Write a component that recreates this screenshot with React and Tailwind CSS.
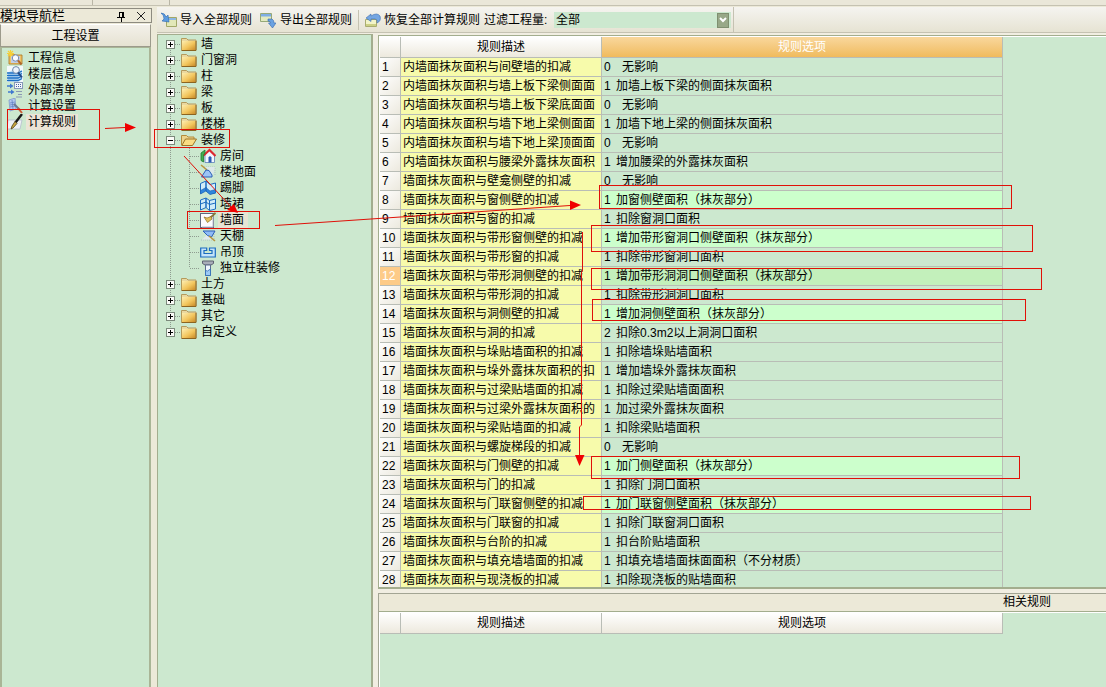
import { useState } from "react";

const NAV_ITEMS = [
  { label: "工程信息", icon: "project" },
  { label: "楼层信息", icon: "floors" },
  { label: "外部清单", icon: "list" },
  { label: "计算设置", icon: "settings" },
  { label: "计算规则", icon: "rules" },
];

const TREE = [
  { label: "墙" },
  { label: "门窗洞" },
  { label: "柱" },
  { label: "梁" },
  { label: "板" },
  { label: "楼梯" },
  {
    label: "装修",
    children: [
      { label: "房间", icon: "room" },
      { label: "楼地面", icon: "ground" },
      { label: "踢脚", icon: "skirting" },
      { label: "墙裙", icon: "dado" },
      { label: "墙面", icon: "wallface" },
      { label: "天棚", icon: "ceiling" },
      { label: "吊顶", icon: "suspended" },
      { label: "独立柱装修", icon: "column" },
    ],
  },
  { label: "土方" },
  { label: "基础" },
  { label: "其它" },
  { label: "自定义" },
];

// [description, option code, option text, highlighted]
const RULES = [
  ["内墙面抹灰面积与间壁墙的扣减", 0, "无影响"],
  ["内墙面抹灰面积与墙上板下梁侧面面", 1, "加墙上板下梁的侧面抹灰面积"],
  ["内墙面抹灰面积与墙上板下梁底面面", 0, "无影响"],
  ["内墙面抹灰面积与墙下地上梁侧面面", 1, "加墙下地上梁的侧面抹灰面积"],
  ["内墙面抹灰面积与墙下地上梁顶面面", 0, "无影响"],
  ["内墙面抹灰面积与腰梁外露抹灰面积", 1, "增加腰梁的外露抹灰面积"],
  ["墙面抹灰面积与壁龛侧壁的扣减", 0, "无影响"],
  ["墙面抹灰面积与窗侧壁的扣减", 1, "加窗侧壁面积（抹灰部分）", true],
  ["墙面抹灰面积与窗的扣减", 1, "扣除窗洞口面积"],
  ["墙面抹灰面积与带形窗侧壁的扣减", 1, "增加带形窗洞口侧壁面积（抹灰部分）", true],
  ["墙面抹灰面积与带形窗的扣减", 1, "扣除带形窗洞口面积"],
  ["墙面抹灰面积与带形洞侧壁的扣减", 1, "增加带形洞洞口侧壁面积（抹灰部分）", true],
  ["墙面抹灰面积与带形洞的扣减", 1, "扣除带形洞洞口面积"],
  ["墙面抹灰面积与洞侧壁的扣减", 1, "增加洞侧壁面积（抹灰部分）", true],
  ["墙面抹灰面积与洞的扣减", 2, "扣除0.3m2以上洞洞口面积"],
  ["墙面抹灰面积与垛贴墙面积的扣减", 1, "扣除墙垛贴墙面积"],
  ["墙面抹灰面积与垛外露抹灰面积的扣", 1, "增加墙垛外露抹灰面积"],
  ["墙面抹灰面积与过梁贴墙面的扣减", 1, "扣除过梁贴墙面面积"],
  ["墙面抹灰面积与过梁外露抹灰面积的", 1, "加过梁外露抹灰面积"],
  ["墙面抹灰面积与梁贴墙面的扣减", 1, "扣除梁贴墙面积"],
  ["墙面抹灰面积与螺旋梯段的扣减", 0, "无影响"],
  ["墙面抹灰面积与门侧壁的扣减", 1, "加门侧壁面积（抹灰部分）", true],
  ["墙面抹灰面积与门的扣减", 1, "扣除门洞口面积"],
  ["墙面抹灰面积与门联窗侧壁的扣减", 1, "加门联窗侧壁面积（抹灰部分）", true],
  ["墙面抹灰面积与门联窗的扣减", 1, "扣除门联窗洞口面积"],
  ["墙面抹灰面积与台阶的扣减", 1, "扣台阶贴墙面积"],
  ["墙面抹灰面积与填充墙墙面的扣减", 1, "扣填充墙墙面抹面面积（不分材质）"],
  ["墙面抹灰面积与现浇板的扣减", 1, "扣除现浇板的贴墙面积"],
];

const ICONS = {
  project: (
    <>
      <path d="M2 4h5l1 1h7v9H2z" fill="#f0c468" stroke="#a87420" strokeWidth=".8" />
      <rect x="4" y="6" width="9" height="7" fill="#c4cfe4" />
      <path d="M3.500 0v7M0 3.500h7M1 1l5 5M6 1L1 6" stroke="#f6cf38" strokeWidth="1.200" />
      <circle cx="8.500" cy="8" r="3.200" fill="#f8faff" stroke="#7a8cae" />
      <path d="M11 10.500l3.500 4" stroke="#b0682c" strokeWidth="2" />
    </>
  ),
  floors: (
    <>
      <rect width="16" height="16" fill="#f4f9fb" />
      <path d="M1 6.500l4-2h10v9l-3 2H1z" fill="#bcdcf6" />
      <path d="M0 7h11l4-2M0 9.500h11l4-2M0 12h11l4-2M0 14.500h11l4-2" stroke="#1c6fc4" strokeWidth="1.300" />
      <circle cx="9" cy="4" r="3.400" fill="#eef4fc" stroke="#6c87a8" />
      <path d="M11 6.500l4 5" stroke="#244a86" strokeWidth="2" />
    </>
  ),
  list: (
    <>
      <rect x="7.500" y=".5" width="8" height="6" fill="#f4f6fb" stroke="#8797b8" />
      <path d="M9 2.500h5M9 4.500h5" stroke="#4a64a0" strokeDasharray="1 1" />
      <path d="M0 4h4M1 10h4" stroke="#3f78d0" strokeWidth="1.400" />
      <path d="M3 1.500L6.500 4 3 6.500zM4 7.500L7.500 10 4 12.500z" fill="#3f78d0" />
      <path d="M9 9.500h6M11 12.500h4M9 15h6" stroke="#8b98b3" />
    </>
  ),
  settings: (
    <>
      <path d="M2 2l6-2 1 11-6 2z" fill="#b4c8f0" stroke="#8098ca" strokeWidth=".8" />
      <path d="M3 5l5-1M3 7l5-1M3 9l5-1M5 2l1 9" stroke="#6484c4" strokeWidth=".8" />
      <path d="M7 6l6 6" stroke="#6c7a94" strokeWidth="2" />
      <path d="M11 10l4 5" stroke="#cc5c34" strokeWidth="2" />
    </>
  ),
  rules: (
    <>
      <path d="M1 6h14l-2 9H0z" fill="#eef1f6" stroke="#b4bccb" strokeWidth=".8" />
      <path d="M15 0L8.500 8.500" stroke="#181818" strokeWidth="2.400" />
      <path d="M8 7.500l2 2L6 14l-2 1 1-3z" fill="#caa640" stroke="#3c3010" strokeWidth=".7" />
    </>
  ),
  room: (
    <>
      <path d="M5 7v7.500h9.500V7L9.500 2.500z" fill="#f2f7ff" stroke="#5b7fb8" strokeWidth=".8" />
      <path d="M3.500 7.500L9.500 2l6 6" stroke="#dc2a30" strokeWidth="2.200" />
      <path d="M1 5l4-3v3L3.500 7v7L1 12.500z" fill="#44b050" stroke="#1f7c32" strokeWidth=".8" />
      <path d="M8.500 14.500V9.500q1.500-2.500 3 0v5z" fill="#2b5cb4" />
    </>
  ),
  ground: (
    <>
      <path d="M4 3h11v8" stroke="#aebfc4" strokeDasharray="1 1" />
      <path d="M5 3h10l-2 8z" fill="#dce8e8" />
      <path d="M1 1l6 5" stroke="#b8963c" strokeWidth="1.600" />
      <path d="M6 6l3 .5 3 4.500v2H1.500L4 9z" fill="#9cc4f6" stroke="#2c5fb8" />
    </>
  ),
  skirting: (
    <>
      <path d="M.500 3.500L6 1v9l-5.500 3.500zM6 1l4 3.500 5.500-1.500v10L10 14 6 11z" fill="#d2ecf8" stroke="#1c6cc0" />
      <path d="M.500 10.500L6 7.500V11L.500 14zM6 7.500l4 3.500 5.500-1.500V13L10 14.500 6 11z" fill="#2f86dc" stroke="#1c60b0" strokeWidth=".6" />
    </>
  ),
  dado: (
    <>
      <path d="M.500 4L6 2v9.500L.500 14zM6 2l3.500 2.500 6-1.500v10l-6 1.500L6 11.500z" fill="#d2ecf8" stroke="#1c6cc0" />
      <path d="M.500 8L6 6l3.500 2.500 6-1.500M9.500 4.500v10" stroke="#1c6cc0" />
    </>
  ),
  wallface: (
    <>
      <rect x=".5" y="1.500" width="13" height="14" fill="#fbfbff" stroke="#60677c" />
      <path d="M2 15h11V4" stroke="#b9bdd0" />
      <path d="M15.500 1L10 6" stroke="#8b7638" strokeWidth="1.800" />
      <path d="M4 5l3 1 4-1.500 1 2.500-4.500 3.500z" fill="#e4c05c" stroke="#8a6a20" strokeWidth=".7" />
    </>
  ),
  ceiling: (
    <>
      <path d="M1 12h13V4" stroke="#aebfc4" strokeDasharray="1 1" />
      <path d="M2 11.500L8 6l6 5.500z" fill="#e2eaec" />
      <path d="M3 3h12l-3.500 6-4-1.500z" fill="#8fbcf6" stroke="#2c5fb8" />
      <path d="M9 8l6 5" stroke="#b8963c" strokeWidth="1.600" />
    </>
  ),
  suspended: <path d="M.700 4h6v2.500H4v3h8v-3H9.500V4h5.800v9H.700z" fill="#c4e4fa" stroke="#1c6cc0" strokeWidth="1.200" />,
  column: (
    <>
      <path d="M2.500 1h11v2.500L11 5H5L2.500 3.500z" fill="#a8adb8" stroke="#5c6270" />
      <path d="M5.500 5h5v10.500h-5z" fill="#eef5fd" stroke="#5c6c8c" />
      <path d="M5.500 10.500l2 .5 3-2v6.500h-5z" fill="#9ccaf4" stroke="#2c6cb8" strokeWidth=".8" />
    </>
  ),
  folder: (
    <>
      <defs>
        <linearGradient id="folderFace" x1="0" y1="0" x2="1" y2="1">
          <stop offset="0" stopColor="#fdeeb0" />
          <stop offset=".55" stopColor="#f2c55c" />
          <stop offset="1" stopColor="#c98a28" />
        </linearGradient>
      </defs>
      <path d="M.500 4V2.500h5L7 4h8v10H.500z" fill="#ead8a0" stroke="#b49a5c" />
      <rect x="1" y="5" width="13.500" height="9" fill="url(#folderFace)" />
      <path d="M.500 14.500h14.500V5" stroke="#8c6420" />
    </>
  ),
  folderOpen: (
    <>
      <path d="M.500 13V3.500h5L7 5h6v3" fill="#ecd48c" stroke="#b48c3c" />
      <path d="M.800 13.500L4.500 7h11l-4 6.500z" fill="#fadc84" stroke="#9c7428" />
    </>
  ),
  importAll: (
    <>
      <path d="M5.500 5.500h10v9h-10z" fill="#e2e8b8" stroke="#a2a868" />
      <path d="M6 6h9v2H6z" fill="#8eb8e4" />
      <path d="M0 1q4 0 5 4l2-2 1 7-7-1 2-2Q3 3 0 1z" fill="#5b9be0" stroke="#2d68b0" strokeWidth=".6" />
    </>
  ),
  exportAll: (
    <>
      <path d="M.500 1.500h11v8H.500z" fill="#e2eac0" stroke="#95a878" />
      <path d="M1 2h10v2.500H1z" fill="#7eaee4" />
      <path d="M8 7h4q2 1 2 4h2l-3.500 5L8.500 11h2q0-2-2.500-2z" fill="#6aa2e2" stroke="#3568ac" strokeWidth=".6" />
    </>
  ),
  restore: (
    <>
      <path d="M.500 7.500h11v7H.500z" fill="#f2f4c8" stroke="#a8ac70" />
      <path d="M1 13h10" stroke="#ccd084" strokeWidth="2" />
      <path d="M1 6l5-4v2q6-4 9 0 1.500 5-3 7 1-4-2-4H6v2.500z" fill="#74a6e2" stroke="#3d6db0" strokeWidth=".6" />
    </>
  ),
};

function Icon({ name }) {
  return (
    <svg className="h-4 w-4 shrink-0" viewBox="0 0 16 16" fill="none" aria-hidden="true">
      {ICONS[name]}
    </svg>
  );
}

// dotted lines and the +/- box in front of a top level node
function GroupLines({ first, last, open }) {
  return (
    <svg className="h-4 w-[23px] shrink-0" viewBox="0 0 23 16" fill="none" shapeRendering="crispEdges" aria-hidden="true">
      <path d={`M12.5 ${first ? 8 : 0}V${last ? 8 : 16}`} stroke="#8f9c90" strokeDasharray="1 1" />
      <path d="M17 8.500H23" stroke="#8f9c90" strokeDasharray="1 1" />
      <rect x="8.500" y="4.500" width="8" height="8" fill="#fbfbf8" stroke="#7c8a7c" />
      <path d={open ? "M10 8.500h5" : "M10 8.500h5M12.500 6v5"} stroke="#000" />
    </svg>
  );
}

function ChildLines({ last }) {
  return (
    <svg className="h-4 w-[42px] shrink-0" viewBox="0 0 42 16" fill="none" shapeRendering="crispEdges" aria-hidden="true">
      <path d="M12.500 0V16" stroke="#8f9c90" strokeDasharray="1 1" />
      <path d={`M31.5 0V${last ? 8 : 16}`} stroke="#8f9c90" strokeDasharray="1 1" />
      <path d="M32 8.500H42" stroke="#8f9c90" strokeDasharray="1 1" />
    </svg>
  );
}

function NavDock({ active, onSelect }) {
  return (
    <aside className="flex w-[152px] shrink-0 flex-col pt-[2px]">
      <div className="flex h-[15px] items-center justify-between border border-l-0 border-[#8d8b80] pr-1">
        <h2 className="whitespace-nowrap text-[13px] leading-[13px]">模块导航栏</h2>
        <div className="flex items-center gap-2">
          <button aria-label="固定" className="h-3 w-3">
            <svg className="h-3 w-3" viewBox="0 0 12 12" fill="none" stroke="#000" shapeRendering="crispEdges">
              <path d="M4.500 7V2.500h4V7M7.500 2v5M2 7.500h8M6.500 8v4" />
            </svg>
          </button>
          <button aria-label="关闭" className="h-3 w-3">
            <svg className="h-3 w-3" viewBox="0 0 12 12" fill="none" stroke="#222">
              <path d="M2 2l8 8M10 2l-8 8" />
            </svg>
          </button>
        </div>
      </div>
      <button className="mt-px h-[23px] w-[151px] border border-[#9c9a8c] border-t-white bg-linear-to-b from-[#f3f1ea] to-[#e6e2d2] text-center">
        工程设置
      </button>
      <ul className="mr-px flex-1 border-x-2 border-t border-[#a9b596] bg-[#cce8cf] pt-[2px] pl-[5px]">
        {NAV_ITEMS.map(item => (
          <li key={item.label}>
            <button className="flex h-4 items-center gap-[3px]" onClick={() => onSelect(item.label)}>
              <Icon name={item.icon} />
              <span className={item.label === active ? "bg-[#ebe4d6] px-[2px] leading-4" : "px-[2px] leading-4"}>
                {item.label}
              </span>
            </button>
          </li>
        ))}
      </ul>
    </aside>
  );
}

function Toolbar() {
  return (
    <div className="flex h-[26px] shrink-0 items-center border-b border-[#c5c2b2] bg-linear-to-b from-[#f5f4f0] to-[#e6e3d3]">
      <button className="ml-1 flex items-center gap-[3px] whitespace-nowrap">
        <Icon name="importAll" />
        导入全部规则
      </button>
      <button className="ml-2 flex items-center gap-[4px] whitespace-nowrap">
        <Icon name="exportAll" />
        导出全部规则
      </button>
      <div className="mx-[6px] h-5 w-px bg-[#c5c2b2]" />
      <button className="flex items-center gap-[3px] whitespace-nowrap">
        <Icon name="restore" />
        恢复全部计算规则
      </button>
      <label htmlFor="filter" className="ml-1 w-[70px] whitespace-nowrap">
        过滤工程量:
      </label>
      <div className="relative">
        <select id="filter" className="block h-4 w-[177px] appearance-none bg-[#cce8cf] pl-[2px] leading-[14px] outline-none">
          <option>全部</option>
        </select>
        <span className="pointer-events-none absolute top-px right-[2px] flex h-[15px] w-3 items-center justify-center border border-[#7f8f70] bg-[#98a888]">
          <svg className="h-2 w-2" viewBox="0 0 8 8" fill="none" stroke="#fff" strokeWidth="2">
            <path d="M1 2l3 3 3-3" />
          </svg>
        </span>
      </div>
      <div className="ml-[2px] h-full w-px bg-[#c5c2b2]" />
    </div>
  );
}

function RuleTree({ active, onSelect }) {
  return (
    <nav className="w-[216px] shrink-0 border-t border-r-2 border-l border-[#a3ad8e] bg-[#cce8cf] pt-px">
      <ul>
        {TREE.map((node, i) => (
          <li key={node.label}>
            <button className="flex h-4 items-center">
              <GroupLines first={i === 0} last={i === TREE.length - 1} open={!!node.children} />
              <Icon name={node.children ? "folderOpen" : "folder"} />
              <span className="pl-1 leading-4">{node.label}</span>
            </button>
            {node.children && (
              <ul>
                {node.children.map((child, j) => (
                  <li key={child.label}>
                    <button className="flex h-4 items-center" onClick={() => onSelect(child.label)}>
                      <ChildLines last={j === node.children.length - 1} />
                      <Icon name={child.icon} />
                      <span className={child.label === active ? "ml-[2px] bg-[#e6e4d4] pr-1 pl-[2px] leading-4" : "pl-1 leading-4"}>
                        {child.label}
                      </span>
                    </button>
                  </li>
                ))}
              </ul>
            )}
          </li>
        ))}
      </ul>
    </nav>
  );
}

function GridHead({ activeOption }) {
  return (
    <>
      <colgroup>
        <col className="w-[21px]" />
        <col className="w-[201px]" />
        <col className="w-[401px]" />
      </colgroup>
      <thead>
        <tr className="h-[21px] bg-linear-to-b from-white to-[#ece8dc]">
          <th className="border-r border-b border-[#b9bdb6]" />
          <th className="border-r border-b border-[#b9bdb6] p-0 font-normal">规则描述</th>
          <th
            className={
              activeOption
                ? "border-r border-b border-[#b9bdb6] bg-linear-to-b from-[#f9d79c] to-[#f0bb5c] p-0 font-normal text-white"
                : "border-r border-b border-[#b9bdb6] p-0 font-normal"
            }
          >
            规则选项
          </th>
        </tr>
      </thead>
    </>
  );
}

function RuleGrid({ selected, onSelect }) {
  const optionBg = (row, highlighted) => {
    if (row === selected) return "bg-[#c3f0bb]";
    return highlighted ? "bg-[#ccffcc]" : "bg-[#cce8cf]";
  };

  return (
    <div className="min-h-0 flex-1 overflow-hidden border-t border-b-2 border-l border-[#a3ad8e] bg-[#cce8cf]">
      <div className="border-t border-l border-white">
        <table className="w-[623px] table-fixed border-separate border-spacing-0">
          <GridHead activeOption />
          <tbody>
            {RULES.map(([desc, code, text, highlighted], i) => (
              <tr key={i} className="h-[19px] whitespace-nowrap" onClick={() => onSelect(i + 1)}>
                <td
                  className={
                    i + 1 === selected
                      ? "border-r border-b border-[#b9bdb6] bg-[#fdcb88] p-0 pl-[2px] font-['Liberation_Sans'] text-white"
                      : "border-r border-b border-[#b9bdb6] bg-linear-to-br from-white to-[#ece9de] p-0 pl-[2px] font-['Liberation_Sans']"
                  }
                >
                  {i + 1}
                </td>
                <td className="overflow-hidden border-r border-b border-[#b9bdb6] bg-[#f7fbab] p-0 pl-[2px]">{desc}</td>
                <td className={`border-r border-b border-[#b9bdb6] p-0 pl-[2px] ${optionBg(i + 1, highlighted)}`}>
                  <span className={code === 0 ? "inline-block w-[18px]" : "inline-block w-3"}>{code}</span>
                  {text}
                </td>
              </tr>
            ))}
          </tbody>
        </table>
      </div>
    </div>
  );
}

function RelatedRules() {
  return (
    <section className="mt-1 flex h-[94px] shrink-0 flex-col border-t border-l border-[#a3a594] bg-[#ece9d8]">
      <h3 className="h-[18px] border-b border-[#a3ad8e] pl-[624px] leading-[17px]">相关规则</h3>
      <div className="flex-1 border-t border-l border-white bg-[#cce8cf]">
        <table className="w-[623px] table-fixed border-separate border-spacing-0">
          <GridHead />
        </table>
      </div>
    </section>
  );
}

// red call-outs drawn over the window
function Annotations() {
  return (
    <svg
      className="pointer-events-none absolute top-0 left-0 h-[687px] w-[1106px]"
      viewBox="0 0 1106 687"
      fill="none"
      stroke="#e01008"
      aria-hidden="true"
    >
      <rect x="7.500" y="109.500" width="92" height="30" />
      <rect x="154.500" y="129.500" width="75" height="18" />
      <rect x="187.500" y="211.500" width="72" height="17" />
      <rect x="599.500" y="185.500" width="412" height="23" />
      <rect x="591.500" y="225.500" width="441" height="26" />
      <rect x="591.500" y="268.500" width="450" height="21" />
      <rect x="592.500" y="299.500" width="433" height="21" />
      <rect x="591.500" y="456.500" width="428" height="22" />
      <rect x="583.500" y="496.500" width="447" height="13" />
      <path d="M105 128.500L125 127.500M184 156L232 208M275 225.500L570 205.500M582.500 232V271L581.500 272V425L579.500 427V456" />
      <g fill="#f00000" stroke="none">
        <path d="M125 123l11 4.500-11 4.500z" />
        <path d="M227 210l7-6 4 9z" />
        <path d="M570 200.500l11 4.500-11 5z" />
        <path d="M575 455h9.500l-5 11z" />
      </g>
    </svg>
  );
}

export default function App() {
  const [page, setPage] = useState("计算规则");
  const [node, setNode] = useState("墙面");
  const [row, setRow] = useState(12);

  return (
    <div className="relative flex h-screen flex-col overflow-hidden bg-[#ece9d8] font-['Liberation_Sans','Noto_Sans_CJK_SC',sans-serif] text-[12px] leading-[16px] text-black">
      <div className="flex h-[6px] shrink-0 border-b border-[#c5c2b2] bg-[#eae7d9]">
        <div className="w-[93px] border-r border-[#b9b6a6]" />
        <div className="w-[77px] border-r border-[#b9b6a6]" />
      </div>
      <div className="flex min-h-0 flex-1 gap-[5px]">
        <NavDock active={page} onSelect={setPage} />
        <div className="flex min-w-0 flex-1 flex-col pt-px">
          <Toolbar />
          <div className="flex min-h-0 flex-1 gap-[5px] bg-[#f1eee2] pt-px">
            <RuleTree active={node} onSelect={setNode} />
            <div className="flex min-w-0 flex-1 flex-col pt-px">
              <RuleGrid selected={row} onSelect={setRow} />
              <RelatedRules />
            </div>
          </div>
        </div>
      </div>
      <Annotations />
    </div>
  );
}
